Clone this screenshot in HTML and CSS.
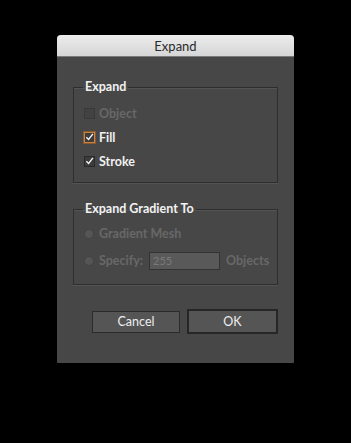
FILE: index.html
```html
<!DOCTYPE html>
<html>
<head>
<meta charset="utf-8">
<link rel="stylesheet" href="styles.css">
</head>
<body>
<div class="dialog">
  <div class="titlebar">Expand</div>
  <div class="content">
    <fieldset class="group g1">
      <legend>Expand</legend>
      <div class="row disabled"><span class="cb cb-off"></span><span>Object</span></div>
      <div class="row"><span class="cb cb-focus"><svg viewBox="0 0 10 10" width="10" height="10"><path d="M1.5 5.2 L4 7.8 L8.8 1.5" fill="none" stroke="#f2f2f2" stroke-width="1.6"/></svg></span><span>Fill</span></div>
      <div class="row"><span class="cb"><svg viewBox="0 0 10 10" width="10" height="10"><path d="M1.5 5.2 L4 7.8 L8.8 1.5" fill="none" stroke="#f2f2f2" stroke-width="1.6"/></svg></span><span>Stroke</span></div>
    </fieldset>
    <fieldset class="group g2">
      <legend>Expand Gradient To</legend>
      <div class="row disabled"><span class="radio"></span><span>Gradient Mesh</span></div>
      <div class="row disabled"><span class="radio"></span><span>Specify:</span><span class="input">255</span><span>Objects</span></div>
    </fieldset>
    <div class="buttons">
      <div class="btn">Cancel</div>
      <div class="btn btn-default">OK</div>
    </div>
  </div>
</div>
</body>
</html>
```
FILE: styles.css
```css
html, body { margin: 0; padding: 0; }
body {
  background: #000;
  width: 351px;
  height: 443px;
  padding: 35px 0 0 57px;
  box-sizing: border-box;
  font-family: "Lato", "Open Sans", sans-serif;
}
.dialog {
  width: 237px;
  height: 328px;
  background: #474747;
  border-radius: 4px 4px 1px 1px;
  overflow: hidden;
  display: flex;
  flex-direction: column;
}
.titlebar {
  height: 22px;
  flex: none;
  background: linear-gradient(#ececec, #d6d6d6);
  color: #2a2a2a;
  font-size: 13px;
  line-height: 22px;
  text-align: center;
  border-bottom: 1px solid #7a7a7a;
  box-sizing: border-box;
}
.content {
  padding: 22px 16px 0 16px;
  display: flex;
  flex-direction: column;
}
.group {
  margin: 0;
  border: 1px solid #2e2e2e;
  box-shadow: 0 1px 0 #545454, inset 0 1px 0 #545454;
  padding: 0 0 0 9px;
  min-width: 0;
}
.group legend {
  padding: 0 2px;
  margin-left: 0;
  color: #f2f2f2;
  font-weight: bold;
  font-size: 12.5px;
  line-height: 16px;
}
.g1 { padding-top: 6px; padding-bottom: 9px; }
.g2 { margin-top: 18px; padding-top: 3px; padding-bottom: 10px; }
.g2 .row { height: 27px; }
.row {
  height: 24px;
  display: flex;
  align-items: center;
  gap: 4px;
  color: #f2f2f2;
  font-weight: bold;
  font-size: 12.5px;
}
.row.disabled { color: #686868; }
.cb {
  width: 11px;
  height: 11px;
  box-sizing: border-box;
  border: 1px solid #2a2a2a;
  background: #3c3c3c;
  display: flex;
  align-items: center;
  justify-content: center;
  margin-left: 1px;
}
.cb-off { background: #424242; border-color: #393939; }
.cb-focus { border-color: #c9833e; box-shadow: 0 0 0 1px #8a5a2e; }
.radio {
  width: 10px;
  height: 10px;
  border-radius: 50%;
  background: #555;
  border: 1px solid #444;
  box-sizing: border-box;
  margin-left: 1px;
  margin-right: 1px;
}
.input {
  width: 71px;
  height: 18px;
  box-sizing: border-box;
  background: #595959;
  border: 1px solid #333;
  color: #7a7a7a;
  font-weight: normal;
  font-size: 11px;
  line-height: 16px;
  padding-left: 3px;
  margin: 0 2px 0 2px;
}
.buttons {
  display: flex;
  justify-content: flex-end;
  align-items: center;
  gap: 7px;
  margin-top: 24px;
}
.btn {
  width: 88px;
  height: 22px;
  box-sizing: border-box;
  background: #555;
  border: 1px solid #2b2b2b;
  color: #eee;
  font-size: 12.5px;
  display: flex;
  align-items: center;
  justify-content: center;
}
.btn-default {
  width: 91px;
  height: 25px;
  border: 2px solid #262626;
}
```
